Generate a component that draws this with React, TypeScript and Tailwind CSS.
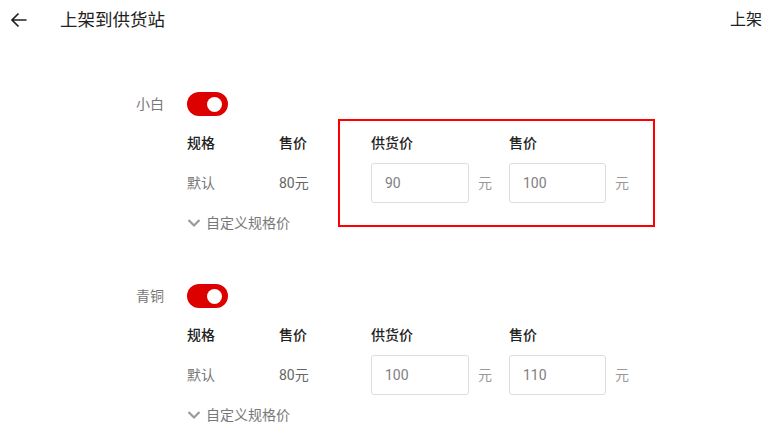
import React from "react";

const FONT = { fontFamily: 'Roboto, "Noto Sans CJK SC", sans-serif' };

function Toggle() {
  return (
    <div className="w-[41px] h-[24px] rounded-full bg-[#dd0000] flex items-center justify-end pr-[6px]">
      <div className="w-[15px] h-[15px] rounded-full bg-white" />
    </div>
  );
}

function Chevron() {
  return (
    <svg width="14" height="10" viewBox="0 0 14 10" className="mr-[5px]">
      <path d="M1.5 2 L7 7.5 L12.5 2" fill="none" stroke="#9a9a9a" strokeWidth="2.2" />
    </svg>
  );
}

function PriceInput({ value }: { value: string }) {
  return (
    <div className="flex items-center">
      <div className="w-[98px] h-[40px] border border-[#dddddd] rounded-[3px] flex items-center pl-[13px] text-[14px] text-[#808080]">
        {value}
      </div>
      <span className="ml-[9px] text-[14px] text-[#9a9a9a]">元</span>
    </div>
  );
}

function Section({
  name,
  supply,
  sale,
  highlight,
}: {
  name: string;
  supply: string;
  sale: string;
  highlight?: boolean;
}) {
  return (
    <div className="relative pl-[136px]">
      <div className="flex items-center h-[24px]">
        <span className="w-[51px] text-[14px] text-[#777777]">{name}</span>
        <Toggle />
      </div>
      <div className="ml-[51px] mt-[7px]">
        <div className="grid grid-cols-[92px_92px_138px_120px] h-[40px] items-center text-[14px] font-medium text-[#222222]">
          <span>规格</span>
          <span>售价</span>
          <span>供货价</span>
          <span>售价</span>
        </div>
        <div className="grid grid-cols-[92px_92px_138px_120px] h-[40px] items-center text-[14px]">
          <span className="text-[#777777]">默认</span>
          <span className="text-[#666666]">80元</span>
          <PriceInput value={supply} />
          <PriceInput value={sale} />
        </div>
        <div className="flex items-center h-[40px] text-[14px] text-[#777777]">
          <Chevron />
          <span>自定义规格价</span>
        </div>
      </div>
      {highlight && (
        <div className="absolute left-[338px] top-[27px] w-[317px] h-[108px] border-2 border-[#ff0000] pointer-events-none" />
      )}
    </div>
  );
}

export default function App() {
  return (
    <div className="w-[776px] h-[431px] bg-white overflow-hidden" style={FONT}>
      <div className="flex items-center h-[40px]">
        <svg width="18" height="18" viewBox="0 0 18 18" className="ml-[10px]">
          <path d="M16.5 9 H2 M8.5 2.5 L2 9 L8.5 15.5" fill="none" stroke="#222222" strokeWidth="1.7" />
        </svg>
        <span className="ml-[32px] text-[17.5px] text-[#222222]">上架到供货站</span>
        <span className="ml-auto mr-[14px] text-[16px] text-[#222222]">上架</span>
      </div>
      <div className="mt-[52px]">
        <Section name="小白" supply="90" sale="100" highlight />
      </div>
      <div className="mt-[41px]">
        <Section name="青铜" supply="100" sale="110" />
      </div>
    </div>
  );
}
